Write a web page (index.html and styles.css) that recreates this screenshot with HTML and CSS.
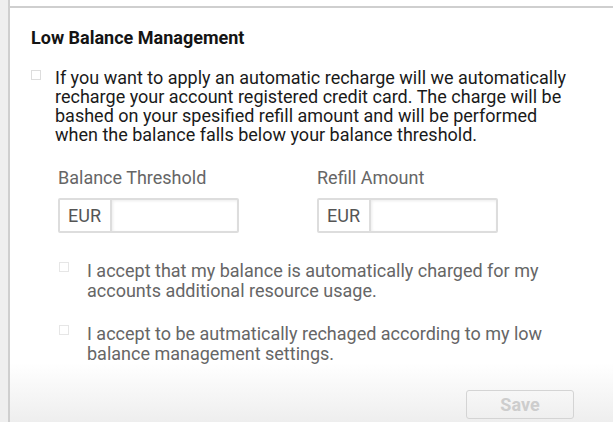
FILE: index.html
```html
<!DOCTYPE html>
<html lang="en">
<head>
    <meta charset="UTF-8">
    <meta name="viewport" content="width=device-width, initial-scale=1.0">
    <title>Low Balance Management</title>
    <link rel="stylesheet" href="styles.css">
</head>
<body>
    <div class="page">
        <div class="gutter"></div>
        <div class="main">
            <div class="panel">
                <h2 class="title">Low Balance Management</h2>

                <label class="check check-main">
                    <input type="checkbox">
                    <span>If you want to apply an automatic recharge will we automatically recharge your account registered credit card. The charge will be bashed on your spesified refill amount and will be performed when the balance falls below your balance threshold.</span>
                </label>

                <div class="fields">
                    <div class="field">
                        <div class="field-label">Balance Threshold</div>
                        <div class="input-group">
                            <span class="addon">EUR</span>
                            <input type="text" class="amount">
                        </div>
                    </div>
                    <div class="field">
                        <div class="field-label">Refill Amount</div>
                        <div class="input-group">
                            <span class="addon">EUR</span>
                            <input type="text" class="amount">
                        </div>
                    </div>
                </div>

                <label class="check check-sub">
                    <input type="checkbox" disabled>
                    <span>I accept that my balance is automatically charged for my accounts additional resource usage.</span>
                </label>

                <label class="check check-sub">
                    <input type="checkbox" disabled>
                    <span>I accept to be autmatically rechaged according to my low balance management settings.</span>
                </label>

                <div class="actions">
                    <button class="btn-save" disabled>Save</button>
                </div>
            </div>
        </div>
    </div>
</body>
</html>
```

FILE: styles.css
```css
* {
    margin: 0;
    padding: 0;
    box-sizing: border-box;
}

body {
    font-family: Roboto, "Liberation Sans", Arial, sans-serif;
    background: white;
    color: #222;
}

.page {
    display: flex;
    height: 422px;
    overflow: hidden;
}

.gutter {
    width: 8px;
    background: #efefef;
}

.main {
    flex: 1;
    border-left: 2px solid #cfcfcf;
    padding-top: 6px;
}

.panel {
    border-top: 2px solid #cfcfcf;
    height: 416px;
    padding: 20px 0 0 21px;
    background: linear-gradient(to bottom, white 0, white 355px, #eeeeee 100%);
}

.title {
    font-size: 18px;
    font-weight: bold;
    line-height: 20px;
    color: #141414;
    margin-bottom: 20px;
}

.check {
    display: flex;
    align-items: flex-start;
}

.check input[type="checkbox"] {
    appearance: none;
    width: 10px;
    height: 10px;
    border: 1px solid #ddd;
    background: white;
    flex-shrink: 0;
}

.check-main {
    font-size: 18px;
    line-height: 19px;
    color: #1a1a1a;
    padding-right: 40px;
}

.check-main input[type="checkbox"] {
    margin: 2px 14px 0 0;
}

.fields {
    display: flex;
    gap: 78px;
    margin: 24px 0 28px 27px;
}

.field-label {
    font-size: 18px;
    line-height: 20px;
    color: #666;
    margin-bottom: 10px;
}

.input-group {
    display: flex;
    width: 181px;
    height: 35px;
    border: 2px solid #ddd;
    border-radius: 2px;
}

.addon {
    width: 52px;
    display: flex;
    align-items: center;
    padding-left: 8px;
    border-right: 2px solid #ddd;
    font-size: 18px;
    color: #555;
}

.amount {
    flex: 1;
    min-width: 0;
    border: none;
    outline: none;
    box-shadow: inset 1px 1px 3px rgba(0,0,0,0.08);
}

.check-sub {
    font-size: 18px;
    line-height: 20px;
    color: #666;
    margin: 0 0 23px 28px;
    padding-right: 60px;
}

.check-sub input[type="checkbox"] {
    margin: 1px 18px 0 0;
    border-color: #e6e6e6;
}

.actions {
    display: flex;
    justify-content: flex-end;
    padding: 3px 39px 0 0;
}

.btn-save {
    width: 108px;
    height: 29px;
    border: 1px solid #d4d4d4;
    border-radius: 3px;
    background: transparent;
    color: #cdcdcd;
    font-family: Roboto, "Liberation Sans", Arial, sans-serif;
    font-size: 18px;
    font-weight: bold;
}
```
